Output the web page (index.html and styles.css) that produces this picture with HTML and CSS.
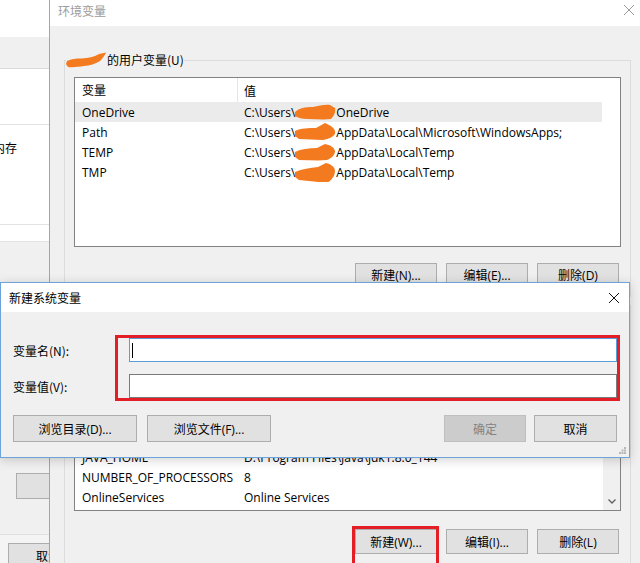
FILE: index.html
```html
<!DOCTYPE html>
<html lang="zh-CN">
<head>
<meta charset="utf-8">
<title>环境变量</title>
<link rel="stylesheet" href="styles.css">
</head>
<body>
<div class="desk">
  <div class="bgwin">
    <div class="bg-top"></div>
    <div class="bg-band"></div>
    <div class="bg-sec1"></div>
    <div class="bg-sec2"><span class="bg-text">内存</span></div>
    <div class="bg-sec3"></div>
    <div class="bg-rest">
      <div class="bg-btn"></div>
      <div class="bg-foot"><div class="bg-btn2">取消</div></div>
    </div>
  </div>

  <div class="envwin">
    <div class="titlebar">
      <span class="wtitle inactive">环境变量</span>
      <svg class="xclose" width="10" height="10" viewBox="0 0 10 10"><path d="M0 0L10 10M10 0L0 10" stroke="#9a9a9a" stroke-width="1" fill="none"/></svg>
    </div>
    <div class="envbody">
      <fieldset class="group">
        <legend><svg class="redact-l" width="41" height="16" viewBox="0 0 41 16"><path d="M1 9 C5 7 10 6.5 16 6.5 C22 6 28 5 33 2 L40 0.5 C39 3 37 6 34 9 C29 12 24 13.5 18 14 C12 15 7 15.5 2 15 L0 12 Z" fill="#f47a1f"/></svg>的用户变量(U)</legend>
        <div class="list">
          <div class="lbody">
            <div class="lhead"><span class="c1">变量</span><span class="c2">值</span></div>
            <div class="row sel"><span class="c1">OneDrive</span><span class="c2">C:\Users\<svg class="redact" width="41" height="20" viewBox="0 0 41 20"><path d="M0 10 C4 6 10 5 18 5 C24 4 30 2 35 3 L40 6 C41 10 39 14 36 17 C29 18 21 17 13 17 C7 17 3 16 0 14 Z" fill="#f47a1f"/></svg>OneDrive</span></div>
            <div class="row"><span class="c1">Path</span><span class="c2">C:\Users\<svg class="redact" width="41" height="20" viewBox="0 0 41 20"><path d="M0 9 C6 6 13 6 21 6 L30 1 L34 3 C38 5 41 8 40 12 C38 15 34 17 28 18 C20 18 12 17 4 17 L0 14 Z" fill="#f47a1f"/></svg>AppData\Local\Microsoft\WindowsApps;</span></div>
            <div class="row"><span class="c1">TEMP</span><span class="c2">C:\Users\<svg class="redact" width="41" height="20" viewBox="0 0 41 20"><path d="M0 10 C6 7 14 6 22 6 L30 2 C35 3 39 5 40 9 C40 13 37 16 32 18 C23 19 13 18 4 18 L0 15 Z" fill="#f47a1f"/></svg>AppData\Local\Temp</span></div>
            <div class="row"><span class="c1">TMP</span><span class="c2">C:\Users\<svg class="redact" width="41" height="22" viewBox="0 0 41 22"><path d="M0 10 C7 7 15 6 23 5 L31 1 C36 2 40 5 40 9 C40 14 37 18 32 21 C24 20 14 19 4 18 L0 15 Z" fill="#f47a1f"/></svg>AppData\Local\Temp</span></div>
          </div>
        </div>
        <div class="btns">
          <button class="btn">新建(N)...</button>
          <button class="btn">编辑(E)...</button>
          <button class="btn">删除(D)</button>
        </div>
      </fieldset>

      <fieldset class="group">
        <legend class="hidden-legend"></legend>
        <div class="list sys">
          <div class="lbody">
            <div class="lhead"></div>
            <div class="row"></div>
            <div class="row"></div>
            <div class="row"></div>
            <div class="row"></div>
            <div class="row"></div>
            <div class="row"><span class="c1">JAVA_HOME</span><span class="c2">D:\Program Files\Java\jdk1.8.0_144</span></div>
            <div class="row"><span class="c1">NUMBER_OF_PROCESSORS</span><span class="c2">8</span></div>
            <div class="row"><span class="c1">OnlineServices</span><span class="c2">Online Services</span></div>
            <div class="row"></div>
          </div>
          <div class="vscroll">
            <div class="sarrow"><svg width="8" height="5" viewBox="0 0 8 5"><path d="M0.5 0.5L4 4L7.5 0.5" stroke="#606060" stroke-width="1.3" fill="none"/></svg></div>
          </div>
        </div>
        <div class="btns btns-sys">
          <button class="btn">新建(W)...</button>
          <button class="btn">编辑(I)...</button>
          <button class="btn">删除(L)</button>
        </div>
      </fieldset>
    </div>
  </div>

  <div class="dialog">
    <div class="dtitle">
      <span class="wtitle">新建系统变量</span>
      <svg width="10" height="10" viewBox="0 0 10 10"><path d="M0 0L10 10M10 0L0 10" stroke="#111" stroke-width="1" fill="none"/></svg>
    </div>
    <div class="dbody">
      <div class="frow">
        <span class="flabel">变量名(N):</span>
        <div class="finput focus"><span class="caret"></span></div>
      </div>
      <div class="frow frow2">
        <span class="flabel">变量值(V):</span>
        <div class="finput"></div>
      </div>
      <div class="dbtns">
        <div class="dgroup">
          <button class="btn wide">浏览目录(D)...</button>
          <button class="btn wide">浏览文件(F)...</button>
        </div>
        <div class="dgroup right">
          <button class="btn disabled">确定</button>
          <button class="btn cancel">取消</button>
        </div>
      </div>
    </div>
    <svg class="grip" width="7" height="7" viewBox="0 0 7 7"><g fill="#b8b8b8"><rect x="5" y="0" width="2" height="2"/><rect x="2.5" y="2.5" width="2" height="2"/><rect x="5" y="2.5" width="2" height="2"/><rect x="0" y="5" width="2" height="2"/><rect x="2.5" y="5" width="2" height="2"/><rect x="5" y="5" width="2" height="2"/></g></svg>
    <div class="mark mark-inputs"></div>
  </div>

  <div class="mark mark-new"></div>
</div>
</body>
</html>
```

FILE: styles.css
```css
html, body {
  margin: 0;
  padding: 0;
}
body {
  width: 640px;
  height: 563px;
  overflow: hidden;
  font-family: "Open Sans", "Noto Sans CJK SC", sans-serif;
  font-size: 12px;
  color: #000;
  background: #f0f0f0;
}
.desk {
  position: relative;
  display: flex;
  width: 640px;
  height: 563px;
  overflow: hidden;
  background: #f0f0f0;
}

/* background window on the left */
.bgwin {
  width: 49px;
  flex: none;
  display: flex;
  flex-direction: column;
  background: #fff;
  border-right: 1px solid #a5a5a5;
  overflow: hidden;
}
.bg-top { height: 37px; flex: none; }
.bg-band { height: 31px; flex: none; background: #f0f0f0; border-bottom: 1px solid #d9d9d9; }
.bg-sec1 { height: 55px; flex: none; border-bottom: 1px solid #e3e3e3; }
.bg-sec2 {
  height: 84px;
  flex: none;
  padding-top: 15px;
  border-bottom: 1px solid #e3e3e3;
  line-height: 16px;
  white-space: nowrap;
}
.bg-text { display: inline-block; margin-left: -7px; font-family: "Noto Sans CJK SC", sans-serif; }
.bg-sec3 { height: 16px; flex: none; border-bottom: 1px solid #e3e3e3; }
.bg-rest {
  flex: 1;
  display: flex;
  flex-direction: column;
  background: #f0f0f0;
}
.bg-btn {
  margin: 231px 0 0 16px;
  width: 45px;
  height: 26px;
  flex: none;
  box-sizing: border-box;
  background: #e1e1e1;
  border: 1px solid #adadad;
}
.bg-foot {
  margin-top: 35px;
  flex: 1;
  border-top: 1px solid #e0e0e0;
  background: #f4f4f4;
  padding: 8px 0 0 8px;
}
.bg-btn2 {
  width: 80px;
  height: 26px;
  box-sizing: border-box;
  background: #e1e1e1;
  border: 1px solid #adadad;
  text-align: center;
  line-height: 24px;
  font-family: "Noto Sans CJK SC", sans-serif;
}

/* environment variables window */
.envwin {
  flex: 1;
  min-width: 0;
  display: flex;
  flex-direction: column;
  background: #f0f0f0;
}
.titlebar {
  height: 26px;
  box-sizing: border-box;
  flex: none;
  background: #fff;
  display: flex;
  align-items: flex-start;
  justify-content: space-between;
  padding: 3px 6px 0 8px;
  line-height: 16px;
}
.xclose { margin-top: 2px; }
.wtitle {
  font-family: "Noto Sans CJK SC", sans-serif;
  font-size: 12px;
  color: #000;
}
.wtitle.inactive { color: #9b9b9b; }
.envbody {
  padding: 26px 9px 0 14px;
}
.group {
  margin: 0;
  min-width: 0;
  border: 1px solid #dcdcdc;
  padding: 9px 9px 9px 9px;
}
.group + .group { padding-bottom: 20px; }
.group legend {
  padding: 0;
  margin-left: -8px;
  line-height: 16px;
  font-family: "Noto Sans CJK SC", sans-serif;
  font-size: 12px;
  white-space: nowrap;
}
.group legend.hidden-legend {
  width: 70px;
  height: 16px;
}
.redact-l { vertical-align: top; }

.list {
  display: flex;
  height: 170px;
  box-sizing: border-box;
  border: 1px solid #828282;
  background: #fff;
  overflow: hidden;
}
.list.sys { height: 189px; }
.lbody {
  flex: 1;
  min-width: 0;
  overflow: hidden;
}
.lhead, .row {
  display: flex;
  width: 527px;
  white-space: nowrap;
}
.lhead {
  height: 24px;
  box-sizing: border-box;
  padding-top: 1px;
  line-height: 23px;
  font-family: "Noto Sans CJK SC", sans-serif;
}
.row {
  height: 20px;
  box-sizing: border-box;
  padding-top: 1px;
  line-height: 19px;
}
.row.sel { background: #ebebeb; }
.c1 {
  flex: none;
  width: 163px;
  box-sizing: border-box;
  padding-left: 7px;
  overflow: hidden;
}
.lhead .c1 { border-right: 1px solid #e5e5e5; margin-top: -1px; }
.c2 {
  flex: 1;
  padding-left: 6px;
  overflow: hidden;
}
.redact { vertical-align: top; margin-top: -1px; }

.vscroll {
  flex: none;
  width: 17px;
  background: #f0f0f0;
  display: flex;
  flex-direction: column;
  justify-content: flex-end;
}
.sarrow {
  height: 17px;
  display: flex;
  align-items: center;
  justify-content: center;
}

.btns {
  display: flex;
  justify-content: flex-end;
  gap: 9px;
  margin-top: 16px;
  padding-right: 2px;
}
.btns-sys { margin-top: 18px; }
.btn {
  width: 82px;
  height: 24px;
  box-sizing: border-box;
  margin: 0;
  padding: 0;
  background: #e1e1e1;
  border: 1px solid #adadad;
  color: #000;
  font-family: "Open Sans", "Noto Sans CJK SC", sans-serif;
  font-size: 12px;
  display: flex;
  align-items: center;
  justify-content: center;
  white-space: nowrap;
}
.btns-sys .btn { height: 25px; }

/* new system variable dialog */
.dialog {
  position: absolute;
  left: 0;
  top: 282px;
  width: 630px;
  box-sizing: border-box;
  border: 1px solid #6ca3d9;
  background: #f0f0f0;
  box-shadow: 0 2px 10px rgba(0, 0, 0, 0.18);
}
.dtitle {
  height: 29px;
  background: #fff;
  display: flex;
  align-items: center;
  justify-content: space-between;
  padding: 0 10px 0 8px;
}
.dbody {
  padding: 26px 12px 15px 12px;
}
.frow {
  display: flex;
  align-items: center;
  height: 24px;
}
.frow2 { margin-top: 12px; }
.flabel {
  width: 116px;
  flex: none;
  font-family: "Noto Sans CJK SC", sans-serif;
}
.finput {
  width: 488px;
  height: 24px;
  box-sizing: border-box;
  background: #fff;
  border: 1px solid #7a7a7a;
  display: flex;
  align-items: center;
  padding-left: 2px;
}
.finput.focus { border-color: #5a9bd8; }
.caret {
  width: 1px;
  height: 15px;
  background: #000;
}
.dbtns {
  display: flex;
  justify-content: space-between;
  margin-top: 17px;
}
.dgroup {
  display: flex;
  gap: 10px;
}
.dgroup.right { gap: 8px; }
.dbtns .btn { height: 27px; }
.btn.wide { width: 124px; }
.btn.cancel { width: 83px; }
.btn.disabled {
  background: #cccccc;
  border-color: #bfbfbf;
  color: #838383;
}
.grip {
  position: absolute;
  right: 3px;
  bottom: 3px;
}

/* red annotation frames */
.mark {
  position: absolute;
  box-sizing: border-box;
  border: 3px solid #e31e26;
}
.mark-inputs {
  left: 114px;
  top: 52px;
  width: 505px;
  height: 66px;
}
.mark-new {
  left: 352px;
  top: 526px;
  width: 87px;
  height: 45px;
}
```
